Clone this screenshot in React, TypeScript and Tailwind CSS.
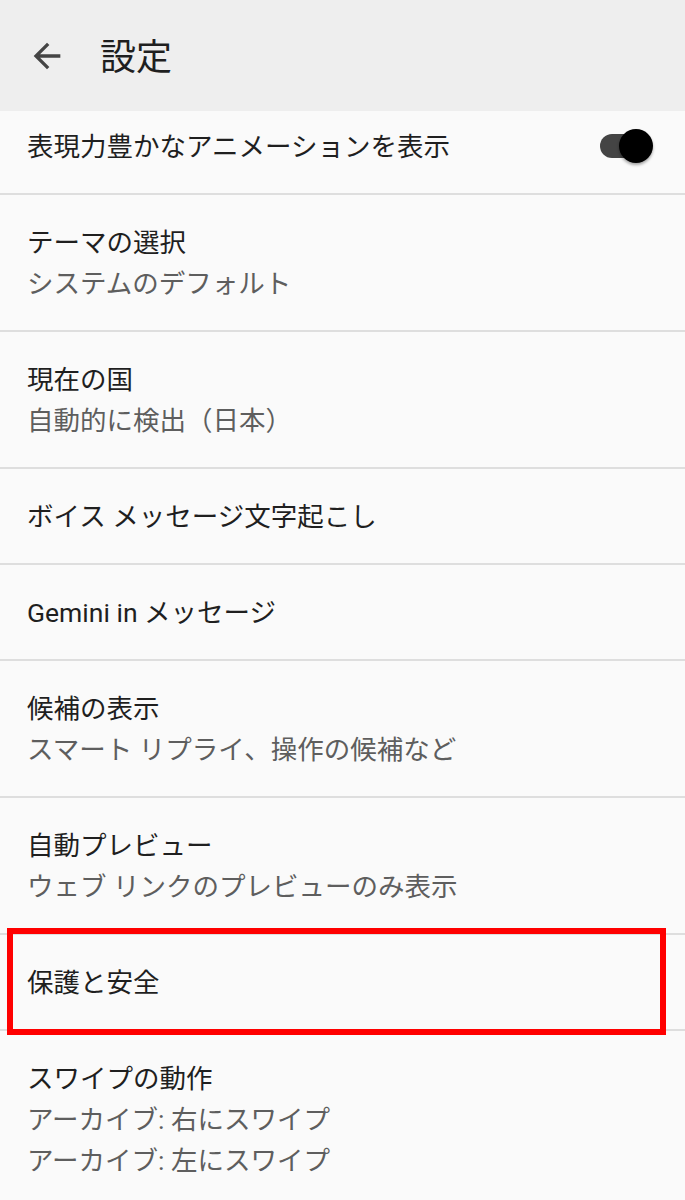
import React from "react";

type Item = {
  title: string;
  lines?: string[];
};

const items: Item[] = [
  { title: "テーマの選択", lines: ["システムのデフォルト"] },
  { title: "現在の国", lines: ["自動的に検出（日本）"] },
  { title: "ボイス メッセージ文字起こし" },
  { title: "Gemini in メッセージ" },
  { title: "候補の表示", lines: ["スマート リプライ、操作の候補など"] },
  { title: "自動プレビュー", lines: ["ウェブ リンクのプレビューのみ表示"] },
];

const Divider = () => <div className="h-[2px] bg-[#dedede]" />;

const Row = ({ item, highlight }: { item: Item; highlight?: boolean }) => (
  <div className="relative px-[27px] pt-[27px] pb-[26px]">
    <div className="h-[41px] text-[26.5px] leading-[41px] text-[#1f1f1f]">{item.title}</div>
    {item.lines?.map((line) => (
      <div key={line} className="h-[41px] text-[26.5px] leading-[41px] text-[#5e5e5e]">
        {line}
      </div>
    ))}
    {highlight && (
      <div className="absolute left-[7px] right-[19px] top-[-7px] bottom-[-6px] border-[6px] border-[#ff0000]" />
    )}
  </div>
);

export default function App() {
  return (
    <div
      className="w-[685px] h-[1200px] overflow-hidden bg-[#fafafa]"
      style={{ fontFamily: "Roboto, 'Noto Sans CJK JP', sans-serif" }}
    >
      <header className="flex h-[111px] items-center bg-[#eeeeee]">
        <div className="ml-[27px] flex h-[40px] w-[40px] items-center justify-center">
          <svg width="40" height="40" viewBox="0 0 24 24" fill="#444444">
            <path d="M20 11H7.83l5.59-5.59L12 4l-8 8 8 8 1.41-1.41L7.83 13H20v-2z" />
          </svg>
        </div>
        <h1 className="ml-[33px] mt-[4px] text-[36px] leading-none text-[#1f1f1f]">設定</h1>
      </header>

      <div className="flex h-[82px] items-start justify-between px-[27px] pt-[15px]">
        <span className="h-[41px] text-[26.5px] leading-[41px] text-[#1f1f1f]">
          表現力豊かなアニメーションを表示
        </span>
        <div className="relative mr-[22px] mt-[8px] h-[24px] w-[36px]">
          <div className="h-[24px] w-[36px] rounded-full bg-[#444444]" />
          <div className="absolute right-[-17px] top-[-5px] h-[34px] w-[34px] rounded-full bg-black shadow-[0_2px_3px_rgba(0,0,0,0.35)]" />
        </div>
      </div>
      <Divider />

      {items.map((item) => (
        <React.Fragment key={item.title}>
          <Row item={item} />
          <Divider />
        </React.Fragment>
      ))}

      <Row item={{ title: "保護と安全" }} highlight />
      <Divider />

      <Row
        item={{
          title: "スワイプの動作",
          lines: ["アーカイブ: 右にスワイプ", "アーカイブ: 左にスワイプ"],
        }}
      />
    </div>
  );
}
